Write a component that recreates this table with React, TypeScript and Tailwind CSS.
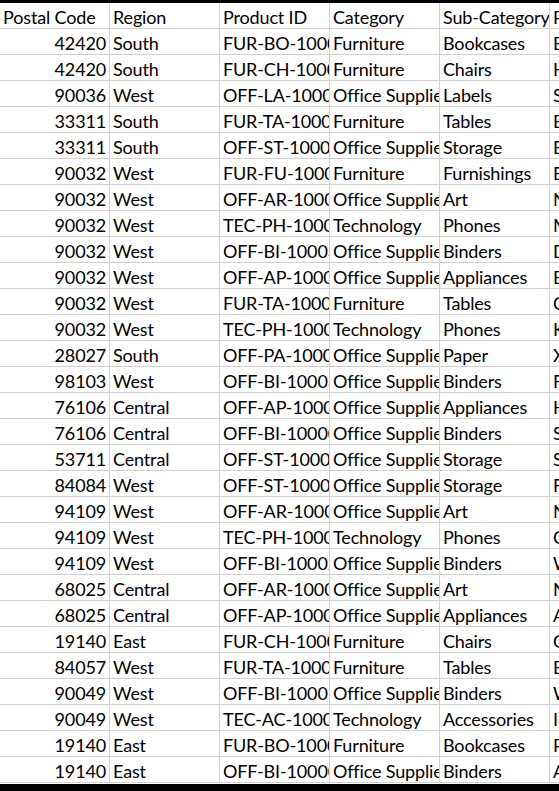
import React from "react";

const rows: [string, string, string, string, string, string][] = [
  ["42420", "South", "FUR-BO-10001798", "Furniture", "Bookcases", "Bush Somerset Collection Bookcase"],
  ["42420", "South", "FUR-CH-10000454", "Furniture", "Chairs", "Hon Deluxe Fabric Upholstered Stacking Chairs"],
  ["90036", "West", "OFF-LA-10000240", "Office Supplies", "Labels", "Self-Adhesive Address Labels"],
  ["33311", "South", "FUR-TA-10000577", "Furniture", "Tables", "Bretford CR4500 Series Slim Rectangular Table"],
  ["33311", "South", "OFF-ST-10000760", "Office Supplies", "Storage", "Eldon Fold 'N Roll Cart System"],
  ["90032", "West", "FUR-FU-10001487", "Furniture", "Furnishings", "Eldon Expressions Wood and Plastic Desk Accessories"],
  ["90032", "West", "OFF-AR-10002833", "Office Supplies", "Art", "Newell 322"],
  ["90032", "West", "TEC-PH-10002275", "Technology", "Phones", "Mitel 5320 IP Phone VoIP phone"],
  ["90032", "West", "OFF-BI-10003910", "Office Supplies", "Binders", "DXL Angle-View Binders"],
  ["90032", "West", "OFF-AP-10002892", "Office Supplies", "Appliances", "Belkin F5C206VTEL 6 Outlet Surge"],
  ["90032", "West", "FUR-TA-10001539", "Furniture", "Tables", "Chromcraft Rectangular Conference Tables"],
  ["90032", "West", "TEC-PH-10002033", "Technology", "Phones", "Konftel 250 Conference phone"],
  ["28027", "South", "OFF-PA-10002365", "Office Supplies", "Paper", "Xerox 1967"],
  ["98103", "West", "OFF-BI-10003656", "Office Supplies", "Binders", "Fellowes PB200 Plastic Comb Binding Machine"],
  ["76106", "Central", "OFF-AP-10002311", "Office Supplies", "Appliances", "Holmes Replacement Filter"],
  ["76106", "Central", "OFF-BI-10000756", "Office Supplies", "Binders", "Storex DuraTech Recycled Plastic Frosted Binders"],
  ["53711", "Central", "OFF-ST-10004186", "Office Supplies", "Storage", "Stur-D-Stor Shelving"],
  ["84084", "West", "OFF-ST-10000107", "Office Supplies", "Storage", "Fellowes Super Stor/Drawer"],
  ["94109", "West", "OFF-AR-10003056", "Office Supplies", "Art", "Newell 341"],
  ["94109", "West", "TEC-PH-10001949", "Technology", "Phones", "Cisco SPA 501G IP Phone"],
  ["94109", "West", "OFF-BI-10002215", "Office Supplies", "Binders", "Wilson Jones Hanging View Binder"],
  ["68025", "Central", "OFF-AR-10000246", "Office Supplies", "Art", "Newell 318"],
  ["68025", "Central", "OFF-AP-10001492", "Office Supplies", "Appliances", "Acco Six-Outlet Power Strip"],
  ["19140", "East", "FUR-CH-10002774", "Furniture", "Chairs", "Global Deluxe Stacking Chair"],
  ["84057", "West", "FUR-TA-10000577", "Furniture", "Tables", "Bretford CR4500 Series Slim Rectangular Table"],
  ["90049", "West", "OFF-BI-10001634", "Office Supplies", "Binders", "Wilson Jones Active Use Binders"],
  ["90049", "West", "TEC-AC-10003027", "Technology", "Accessories", "Imation 8GB Mini TravelDrive USB 2.0 Flash Drive"],
  ["19140", "East", "FUR-BO-10004834", "Furniture", "Bookcases", "Riverside Palais Royal Lawyers Bookcase"],
  ["19140", "East", "OFF-BI-10000474", "Office Supplies", "Binders", "Avery Recycled Fanfold 8 1/2\" x 11\" Labels"],
];

const header = ["Postal Code", "Region", "Product ID", "Category", "Sub-Category", "Product Name"];

function Cell({ text, right }: { text: string; right?: boolean }) {
  return (
    <div
      className={
        "w-[110px] shrink-0 h-full border-r border-[#d0d0d0] overflow-hidden whitespace-nowrap flex items-center px-[3px] pt-[3px] " +
        (right ? "justify-end" : "justify-start")
      }
    >
      <span>{text}</span>
    </div>
  );
}

export default function App() {
  return (
    <div
      className="w-[559px] h-[791px] bg-black overflow-hidden text-black"
      style={{ fontFamily: "Lato, 'Liberation Sans', sans-serif" }}
    >
      <div className="pt-[3px]">
        <div className="bg-white text-[18px] leading-none tracking-[-0.15px]">
          <div className="flex h-[26px] border-b border-[#d0d0d0]">
            {header.map((h, i) => (
              <Cell key={i} text={h} />
            ))}
          </div>
          {rows.map((r, i) => (
            <div key={i} className="flex h-[26px] border-b border-[#d0d0d0]">
              {r.map((c, j) => (
                <Cell key={j} text={c} right={j === 0} />
              ))}
            </div>
          ))}
          <div className="h-[1px] bg-white" />
        </div>
      </div>
    </div>
  );
}
